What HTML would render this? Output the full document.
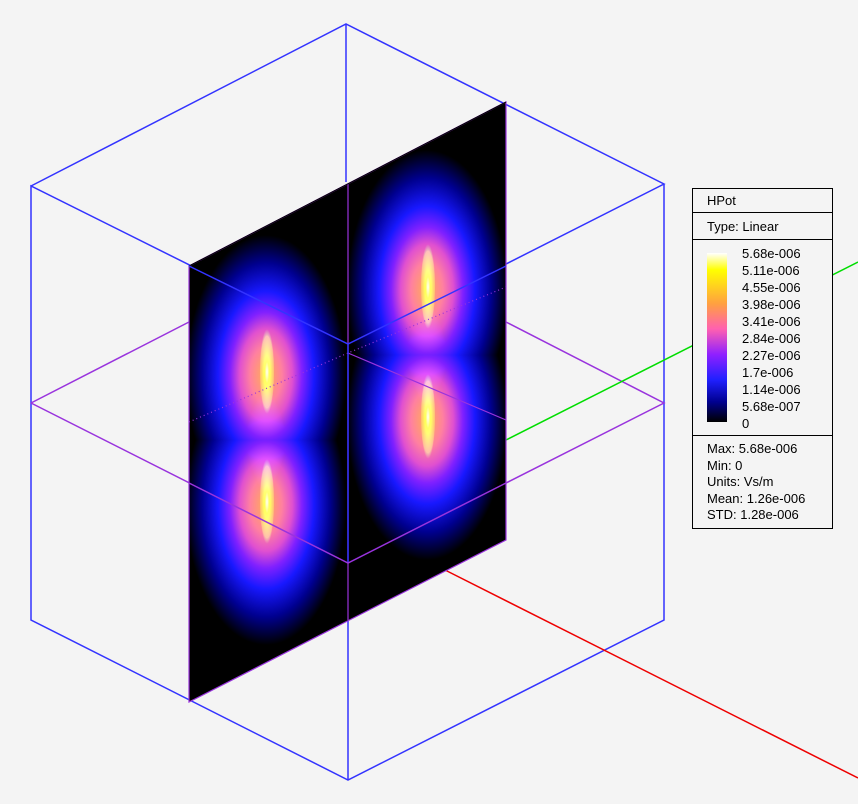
<!DOCTYPE html>
<html><head><style>
body{margin:0;background:#f4f4f4;font-family:"Liberation Sans",sans-serif;}
#leg{position:absolute;left:692px;top:188px;width:139px;height:339px;border:1px solid #000;background:#f4f4f4;font-size:13px;color:#000;}
.r{position:absolute;left:0;width:139px;border-bottom:1px solid #000;}
.t{position:absolute;left:14px;}
.b{mix-blend-mode:lighten}
</style></head><body>
<svg width="858" height="804" style="position:absolute;left:0;top:0">
<defs>
<radialGradient id="g" cx="0.5" cy="0.5" r="0.5">
<stop offset="0" stop-color="#ffb050"/>
<stop offset="0.2" stop-color="#ff80a0"/>
<stop offset="0.33" stop-color="#e050d0"/>
<stop offset="0.45" stop-color="#8020ff"/>
<stop offset="0.6" stop-color="#1818ff"/>
<stop offset="0.8" stop-color="#000090"/>
<stop offset="1" stop-color="#000"/>
</radialGradient>
<radialGradient id="k" cx="0.5" cy="0.5" r="0.5">
<stop offset="0" stop-color="#fff"/>
<stop offset="0.35" stop-color="#ffff20"/>
<stop offset="0.75" stop-color="#ffc040"/>
<stop offset="1" stop-color="#000"/>
</radialGradient>
<clipPath id="c"><polygon points="189,266 506,102 506,540 189,702"/></clipPath>
</defs>
<g stroke-width="1.5" fill="none">
<polyline stroke="#3333ff" points="31,186 346,24 664,184 348,344 31,186 31,620 348,780 664,620 664,184"/>
<line stroke="#3333ff" x1="346" y1="24" x2="346" y2="182"/>
<line stroke="#3333ff" x1="348" y1="344" x2="348" y2="780"/>
<polyline stroke="#9933dd" points="31,403 189,322"/>
<polyline stroke="#9933dd" points="506,322 664,403 348,563 31,403"/>
<line stroke="#ee0000" x1="445" y1="570" x2="858" y2="778"/>
<line stroke="#00dd00" x1="506" y1="440" x2="858" y2="262"/>
</g>
<g clip-path="url(#c)">
<rect x="180" y="90" width="340" height="620" fill="#000"/>
<g style="isolation:isolate">
<ellipse class="b" cx="266" cy="375" rx="80" ry="140" fill="url(#g)"/>
<ellipse class="b" cx="266" cy="505" rx="80" ry="140" fill="url(#g)"/>
<ellipse class="b" cx="427" cy="290" rx="80" ry="140" fill="url(#g)"/>
<ellipse class="b" cx="427" cy="420" rx="80" ry="140" fill="url(#g)"/>
<ellipse class="b" cx="267" cy="372" rx="9" ry="48" fill="url(#k)"/>
<ellipse class="b" cx="267" cy="502" rx="9" ry="48" fill="url(#k)"/>
<ellipse class="b" cx="428" cy="287" rx="9" ry="48" fill="url(#k)"/>
<ellipse class="b" cx="428" cy="417" rx="9" ry="48" fill="url(#k)"/>
</g>
</g>
<g stroke-width="1.2" fill="none" stroke="#9933dd">
<polygon points="189,266 506,102 506,540 189,702"/>
<line x1="348" y1="184" x2="348" y2="620"/>
<polyline points="189,422 348,353 506,287" stroke-dasharray="1 3"/>
<line x1="348" y1="353" x2="506" y2="420"/>
</g>
<line x1="189" y1="266" x2="506" y2="102" stroke="#000" stroke-width="1"/>
<g stroke-width="1.5" fill="none">
<polyline stroke="#3333ff" points="189,266 348,344 506,266"/>
<line stroke="#3333ff" x1="348" y1="344" x2="348" y2="563"/>
<polyline stroke="#9933dd" points="189,483 348,563 506,483"/>
</g>
</svg>
<div id="leg">
<div class="r" style="top:0;height:23px"><span class="t" style="top:4px">HPot</span></div>
<div class="r" style="top:24px;height:26px"><span class="t" style="top:6px">Type: Linear</span></div>
<div class="r" style="top:51px;height:195px">
<div style="position:absolute;left:14px;top:13px;width:20px;height:169px;background:linear-gradient(#fff,#ffff00 10%,#ffa040 30%,#ff60b0 45%,#9020ff 60%,#2020ff 75%,#000090 88%,#000)"></div>
<div style="position:absolute;left:49px;top:5px;line-height:17px">5.68e-006<br>5.11e-006<br>4.55e-006<br>3.98e-006<br>3.41e-006<br>2.84e-006<br>2.27e-006<br>1.7e-006<br>1.14e-006<br>5.68e-007<br>0</div>
</div>
<div style="position:absolute;left:14px;top:252px;line-height:16.5px">Max: 5.68e-006<br>Min: 0<br>Units: Vs/m<br>Mean: 1.26e-006<br>STD: 1.28e-006</div>
</div>
</body></html>
